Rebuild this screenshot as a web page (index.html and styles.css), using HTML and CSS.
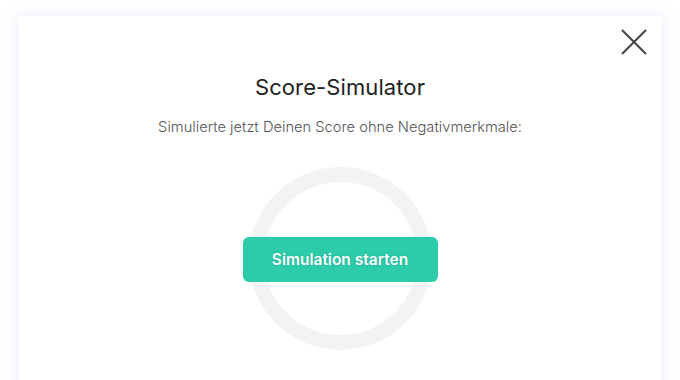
FILE: index.html
```html
<!DOCTYPE html>
<html lang="de">
<head>
<meta charset="utf-8">
<link rel="stylesheet" href="styles.css">
</head>
<body>
<div class="page">
  <div class="card">
    <button class="close" aria-label="Schließen">
      <svg width="26" height="26" viewBox="0 0 26 26"><path d="M1 1L25 25M25 1L1 25" stroke="#444" stroke-width="2" fill="none"/></svg>
    </button>
    <h1 class="title">Score-Simulator</h1>
    <p class="subtitle">Simulierte jetzt Deinen Score ohne Negativmerkmale:</p>
    <div class="ring">
      <button class="start">Simulation starten</button>
    </div>
  </div>
</div>
</body>
</html>
```
FILE: styles.css
```css
html, body { margin: 0; padding: 0; background: #fff; }
body { font-family: "Inter", "Noto Sans", sans-serif; }
.page { padding: 16px 19px 0; height: 364px; overflow: hidden; }
.card {
  position: relative;
  background: #fff;
  height: 400px;
  box-shadow: 0 0 18px rgba(90, 110, 220, 0.14);
  display: flex;
  flex-direction: column;
  align-items: center;
}
.close {
  position: absolute;
  top: 13px;
  right: 14px;
  border: 0;
  background: none;
  padding: 0;
  width: 26px;
  height: 26px;
  display: flex;
}
.title {
  margin: 58px 0 0;
  font-size: 22px;
  line-height: 26px;
  font-weight: 400;
  color: #222;
  letter-spacing: 0.1px;
}
.subtitle {
  margin: 17px 0 0;
  font-size: 14.7px;
  line-height: 20px;
  font-weight: 300;
  color: #555;
}
.ring {
  margin-top: 30px;
  width: 153px;
  height: 153px;
  border: 15px solid #f3f3f3;
  border-radius: 50%;
  display: flex;
  align-items: center;
  justify-content: center;
}
.start {
  flex: none;
  width: 195px;
  height: 45px;
  margin-top: 2px;
  border: 0;
  border-radius: 6px;
  background: #2ccbaa;
  color: #fff;
  font-family: "Inter", sans-serif;
  font-size: 15.5px;
  font-weight: 600;
  text-shadow: 0 0 2px rgba(0, 80, 60, 0.25);
}
```
